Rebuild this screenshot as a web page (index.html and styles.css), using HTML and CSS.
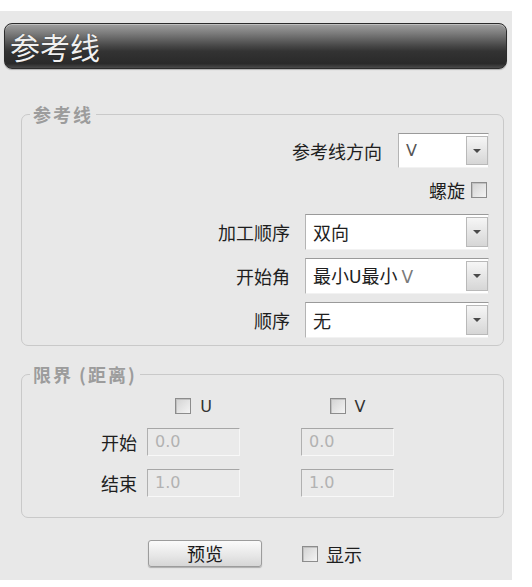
FILE: index.html
```html
<!DOCTYPE html>
<html lang="zh-CN">
<head>
<meta charset="utf-8">
<title>参考线</title>
<link rel="stylesheet" href="styles.css">
</head>
<body>
<div class="panel">
  <div class="titlebar">参考线</div>

  <fieldset class="group group-main">
    <legend>参考线</legend>
    <div class="row row-dir">
      <span class="label">参考线方向</span>
      <div class="select select-small"><span class="val latin">V</span><span class="arrow"></span></div>
    </div>
    <div class="row row-spiral">
      <span class="label">螺旋</span>
      <span class="check"></span>
    </div>
    <div class="row row-sel first">
      <span class="label">加工顺序</span>
      <div class="select"><span class="val">双向</span><span class="arrow"></span></div>
    </div>
    <div class="row row-sel">
      <span class="label">开始角</span>
      <div class="select"><span class="val">最小<span class="latin">U</span>最小 <span class="latin grey">V</span></span><span class="arrow"></span></div>
    </div>
    <div class="row row-sel">
      <span class="label">顺序</span>
      <div class="select"><span class="val">无</span><span class="arrow"></span></div>
    </div>
  </fieldset>

  <fieldset class="group group-limit">
    <legend>限界 (距离)</legend>
    <div class="limit-grid">
      <div class="cb-cell col-u"><span class="check"></span><span class="latin">U</span></div>
      <div class="cb-cell col-v"><span class="check"></span><span class="latin">V</span></div>
      <span class="label lim-label">开始</span>
      <div class="input col-u">0.0</div>
      <div class="input col-v">0.0</div>
      <span class="label lim-label">结束</span>
      <div class="input col-u">1.0</div>
      <div class="input col-v">1.0</div>
    </div>
  </fieldset>

  <div class="bottom">
    <div class="button">预览</div>
    <span class="check"></span>
    <span class="label show">显示</span>
  </div>
</div>
</body>
</html>
```
FILE: styles.css
```css
html, body {
  margin: 0;
  padding: 0;
  background: #ffffff;
}

body {
  font-family: "Noto Sans CJK SC", "Noto Sans", sans-serif;
  color: #1e1e1e;
}

.latin {
  font-family: "DejaVu Sans", "Noto Sans CJK SC", sans-serif;
}

.panel {
  width: 512px;
  height: 569px;
  margin-top: 11px;
  background: #e8e8e8;
  padding-top: 12px;
  box-sizing: border-box;
  display: flex;
  flex-direction: column;
}

.titlebar {
  margin-left: 4px;
  width: 503px;
  height: 46px;
  box-sizing: border-box;
  border: 1px solid #2c2c2c;
  border-radius: 8px;
  background: linear-gradient(to bottom, #a0a0a0 0%, #7a7a7a 22%, #4a4a4a 48%, #333333 62%, #2a2a2a 90%, #4a4a4a 100%);
  box-shadow: inset 0 1px 0 rgba(255, 255, 255, 0.35), 0 1px 1px rgba(0, 0, 0, 0.25);
  color: #f0f0f0;
  font-size: 30px;
  line-height: 44px;
  padding-left: 5px;
  text-shadow: 0 0 1px rgba(0, 0, 0, 0.6);
  display: flex;
  align-items: center;
}

.group {
  margin: 0 0 0 21px;
  width: 483px;
  box-sizing: border-box;
  border: 1px solid #c9c9c9;
  border-radius: 7px;
  min-inline-size: 0;
}

.group legend {
  margin-left: 8px;
  padding: 0 3px;
  font-size: 18px;
  line-height: 20px;
  font-weight: bold;
  letter-spacing: 2px;
  color: #9c9c9c;
}

.group-main {
  margin-top: 35px;
  padding: 9px 14px 7px 0;
  display: flex;
  flex-direction: column;
}

.row {
  display: flex;
  justify-content: flex-end;
  align-items: center;
}

.label {
  font-size: 18px;
  line-height: 20px;
  color: #1e1e1e;
  white-space: nowrap;
}

.row-dir {
  gap: 16px;
}

.row-spiral {
  margin-top: 12px;
  height: 20px;
  gap: 6px;
  padding-right: 2px;
}

.row-sel {
  margin-top: 8px;
  gap: 15px;
}

.row-sel.first {
  margin-top: 14px;
}

.select {
  width: 184px;
  height: 36px;
  box-sizing: border-box;
  background: #ffffff;
  border-top: 1px solid #9a9a9a;
  border-left: 1px solid #b4b4b4;
  border-right: 1px solid #e2e2e2;
  border-bottom: 1px solid #f2f2f2;
  display: flex;
  align-items: center;
  padding: 2px 0 2px 7px;
  font-size: 18px;
}

.select-small {
  width: 91px;
  height: 35px;
}

.select .val {
  flex: 1;
  line-height: 20px;
  white-space: nowrap;
  color: #1e1e1e;
}

.select-small .val {
  font-size: 16px;
  color: #555555;
}

.val .latin {
  font-size: 17px;
}

.val .grey {
  color: #7a7a7a;
}

.arrow {
  width: 22px;
  align-self: stretch;
  box-sizing: border-box;
  border: 1px solid #b9b9b9;
  background: linear-gradient(to bottom, #f6f6f6, #d6d6d6);
  display: flex;
  align-items: center;
  justify-content: center;
}

.arrow::after {
  content: "";
  width: 0;
  height: 0;
  border-left: 4px solid transparent;
  border-right: 4px solid transparent;
  border-top: 4px solid #4a4a4a;
}

.check {
  display: inline-block;
  width: 16px;
  height: 16px;
  box-sizing: border-box;
  border: 1px solid #8c8c8c;
  background: linear-gradient(135deg, #d2d2d2, #f4f4f4);
  box-shadow: inset 1px 1px 0 #c0c0c0;
}

.group-limit {
  margin-top: 18px;
  padding: 13px 0 20px 0;
}

.limit-grid {
  display: grid;
  grid-template-columns: 125px 93px 61px 93px;
  grid-template-rows: 18px 28px 28px;
  row-gap: 13px;
  align-items: center;
}

.col-u {
  grid-column: 2;
}

.col-v {
  grid-column: 4;
}

.cb-cell {
  display: flex;
  align-items: center;
  justify-content: center;
  gap: 9px;
  font-size: 16px;
  color: #333333;
}

.lim-label {
  grid-column: 1;
  text-align: right;
  padding-right: 10px;
}

.input {
  height: 28px;
  box-sizing: border-box;
  background: #eaeaea;
  border-top: 1px solid #a6a6a6;
  border-left: 1px solid #b0b0b0;
  border-right: 1px solid #f6f6f6;
  border-bottom: 1px solid #f8f8f8;
  font-family: "DejaVu Sans", sans-serif;
  font-size: 16px;
  line-height: 26px;
  color: #b2b2b2;
  padding-left: 7px;
}

.bottom {
  margin-top: 22px;
  padding-left: 148px;
  display: flex;
  align-items: center;
}

.button {
  width: 114px;
  height: 27px;
  box-sizing: border-box;
  border: 1px solid #9c9c9c;
  border-radius: 3px;
  background: linear-gradient(to bottom, #fbfbfb, #e6e6e6 60%, #d6d6d6);
  box-shadow: 0 1px 1px rgba(0, 0, 0, 0.25);
  font-size: 18px;
  line-height: 25px;
  text-align: center;
  color: #1a1a1a;
}

.bottom .check {
  margin-left: 40px;
}

.show {
  margin-left: 8px;
}
```
